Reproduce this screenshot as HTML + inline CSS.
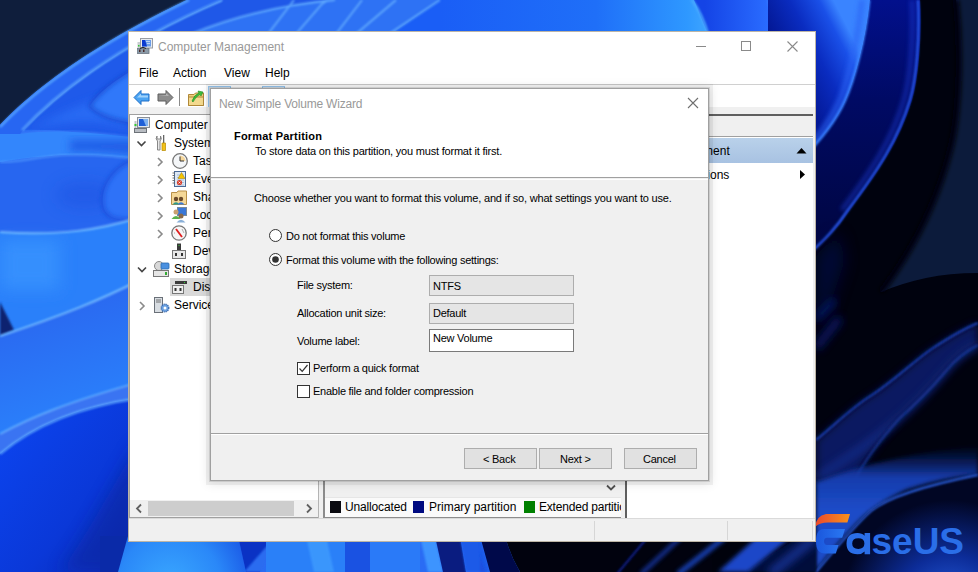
<!DOCTYPE html>
<html><head><meta charset="utf-8">
<style>
*{box-sizing:border-box}
html,body{margin:0;padding:0}
body{width:978px;height:572px;overflow:hidden;position:relative;background:#0c1a38;font-family:"Liberation Sans",sans-serif;}
.a{position:absolute}
.t{position:absolute;white-space:nowrap;line-height:1;font-size:12px;color:#000}
.d{font-size:11px;letter-spacing:-0.25px}
</style></head><body>
<svg id="wp" class="a" style="left:0;top:0" width="978" height="572" viewBox="0 0 978 572">
<defs>
<filter id="b1" x="-20%" y="-20%" width="140%" height="140%"><feGaussianBlur stdDeviation="0.9"/></filter>
<filter id="b2" x="-20%" y="-20%" width="140%" height="140%"><feGaussianBlur stdDeviation="2"/></filter>
<filter id="b4" x="-30%" y="-30%" width="160%" height="160%"><feGaussianBlur stdDeviation="4"/></filter>
<filter id="b8" x="-50%" y="-50%" width="200%" height="200%"><feGaussianBlur stdDeviation="8"/></filter>
<linearGradient id="gDeep" x1="0" y1="0" x2="1" y2="1">
<stop offset="0" stop-color="#0c46f2"/><stop offset="0.6" stop-color="#0a38d8"/><stop offset="1" stop-color="#0828b0"/>
</linearGradient>
<linearGradient id="gTopR" x1="440" y1="0" x2="700" y2="0" gradientUnits="userSpaceOnUse">
<stop offset="0" stop-color="#1a5ef6"/><stop offset="0.6" stop-color="#1f6ff8"/><stop offset="0.95" stop-color="#2e98ff"/><stop offset="1" stop-color="#38a0ff"/>
</linearGradient>
<linearGradient id="gP1" x1="785" y1="95" x2="862" y2="55" gradientUnits="userSpaceOnUse">
<stop offset="0" stop-color="#000e80"/><stop offset="0.55" stop-color="#0a2cc0"/><stop offset="0.85" stop-color="#1a50e8"/><stop offset="1" stop-color="#3a84ff"/>
</linearGradient>
<linearGradient id="gP0" x1="705" y1="0" x2="768" y2="0" gradientUnits="userSpaceOnUse">
<stop offset="0" stop-color="#1444e6"/><stop offset="1" stop-color="#2a6cff"/>
</linearGradient>
<linearGradient id="gR2" x1="0" y1="0" x2="0" y2="250" gradientUnits="userSpaceOnUse">
<stop offset="0" stop-color="#02108c"/><stop offset="0.4" stop-color="#000a64"/><stop offset="1" stop-color="#000640"/>
</linearGradient>
<linearGradient id="gP1R" x1="816" y1="0" x2="870" y2="0" gradientUnits="userSpaceOnUse">
<stop offset="0" stop-color="#0a2cbc"/><stop offset="0.75" stop-color="#1748e4"/><stop offset="1" stop-color="#3a80ff"/>
</linearGradient>
<radialGradient id="gBulge" cx="170" cy="585" r="85" gradientUnits="userSpaceOnUse">
<stop offset="0" stop-color="#3aa8ff"/><stop offset="0.6" stop-color="#2a88f8"/><stop offset="1" stop-color="#1a58e6"/>
</radialGradient>
<radialGradient id="gGlow" cx="950" cy="610" r="110" gradientUnits="userSpaceOnUse">
<stop offset="0" stop-color="#2a64e8"/><stop offset="0.5" stop-color="#0c2c98"/><stop offset="1" stop-color="#010624"/>
</radialGradient>
<linearGradient id="gBand" x1="0" y1="445" x2="0" y2="510" gradientUnits="userSpaceOnUse">
<stop offset="0" stop-color="#0a2478" stop-opacity="0"/><stop offset="0.5" stop-color="#163cac"/><stop offset="1" stop-color="#1c4cc8"/>
</linearGradient>
<linearGradient id="gMid" x1="0" y1="320" x2="40" y2="440" gradientUnits="userSpaceOnUse">
<stop offset="0" stop-color="#2a68f0"/><stop offset="1" stop-color="#2a82fc"/>
</linearGradient>
</defs>
<rect width="978" height="572" fill="#00020c"/>

<!-- ===== LEFT / TOP bloom ===== -->
<rect x="0" y="0" width="712" height="572" fill="#2a6cf4"/>
<!-- left strip petals -->
<path d="M22,130 C50,100 110,48 222,0 H300 V140 H128 C100,136 60,128 22,130 Z" fill="#1f5aea"/>
<path d="M30,130 C60,122 90,118 128,128 V90 C90,100 60,112 30,130 Z" fill="#2c6ef6" opacity="0.8" filter="url(#b4)"/>
<path d="M140,66 C110,82 94,98 90,106 C98,116 115,121 140,124 Z" fill="#3078fa"/>
<path d="M140,66 C110,82 94,98 90,106 C98,116 115,121 140,124" stroke="#1240c8" stroke-width="3" fill="none" opacity="0.75" filter="url(#b2)"/>
<path d="M20,134 C60,128 100,134 140,138" stroke="#4a90ff" stroke-width="1.6" fill="none" opacity="0.8" filter="url(#b1)"/>
<!-- band y134..160 -->
<path d="M0,125 L20,134 C60,128 100,134 140,138 V160 C100,154 60,152 0,162 Z" fill="#3386fc"/>
<path d="M70,140 H140 V156 C110,152 80,150 70,152 Z" fill="#1a52e2" opacity="0.8" filter="url(#b4)"/>
<!-- petal interior y160..233 -->
<path d="M0,162 C20,163 40,156 64,155 C90,154 110,156 140,159 V222 C100,232 60,236 0,232 Z" fill="#2766f0"/>
<ellipse cx="85" cy="195" rx="30" ry="14" fill="#1a50e0" opacity="0.45" filter="url(#b8)"/>
<path d="M0,162 C20,163 40,156 64,155 C90,154 110,156 140,159" stroke="#5aa4ff" stroke-width="1.6" fill="none" opacity="0.8" filter="url(#b1)"/>
<path d="M140,158 C112,165 101,188 103,204 C104,215 112,222 140,219 Z" fill="#2e72f8"/>
<path d="M140,158 C112,165 101,188 103,204 C104,215 112,222 140,219" stroke="#1442d0" stroke-width="3" fill="none" opacity="0.7" filter="url(#b2)"/>
<!-- y 233..335 -->
<path d="M0,232 C60,236 100,230 140,217 V281 C100,300 64,315 0,336 Z" fill="#2a80fa"/>
<path d="M0,240 H60 V290 H0 Z" fill="#3a96ff" opacity="0.7" filter="url(#b8)"/>
<path d="M0,232 C60,236 100,230 140,217" stroke="#7ac0ff" stroke-width="2" fill="none" opacity="0.9" filter="url(#b1)"/>
<path d="M0,302 L14,330 L0,336 Z" fill="#0a2070" filter="url(#b1)"/>
<!-- y 335..455 -->
<path d="M0,336 C64,315 100,300 140,280 V396 C90,405 40,420 0,454 Z" fill="url(#gMid)"/>
<path d="M0,336 C64,315 100,300 140,280" stroke="#7ac0ff" stroke-width="2" fill="none" opacity="0.9" filter="url(#b1)"/>
<path d="M0,434 C30,418 64,403 140,382 V398 C90,405 40,420 0,454 Z" fill="#3a74f2"/>
<path d="M0,434 C30,418 64,403 140,382" stroke="#6ab4ff" stroke-width="1.8" fill="none" opacity="0.9" filter="url(#b1)"/>
<!-- deep blue below line 2 -->
<path d="M0,454 C40,420 90,405 140,398 V572 H0 Z" fill="url(#gDeep)"/>
<path d="M0,454 C40,420 90,405 140,398" stroke="#6ab4ff" stroke-width="1.8" fill="none" opacity="0.9" filter="url(#b1)"/>
<path d="M60,572 C90,530 110,490 140,440 V572 Z" fill="#0826a0" opacity="0.6" filter="url(#b8)"/>

<!-- top right part of top strip -->
<path d="M430,0 H694 L712,34 H380 Z" fill="url(#gTopR)"/>
<path d="M694,0 H768 L775,34 H708 Z" fill="url(#gP0)"/>
<path d="M692,0 Q702,14 708,34" stroke="#48a8ff" stroke-width="2.5" fill="none" filter="url(#b1)"/>
<path d="M768,0 Q772,14 774,34" stroke="#3a7cff" stroke-width="2" fill="none" filter="url(#b1)"/>
<!-- between lines in top strip -->
<path d="M150,31 C175,18 200,8 222,0 H330 C300,5 260,12 191,34 Z" fill="#1f58e8"/>
<path d="M191,34 C240,14 290,4 330,0 H440 L391,34 Z" fill="#2e72f4"/>
<g stroke="#6ab4ff" fill="none" stroke-width="1.8" opacity="0.85" filter="url(#b1)">
<path d="M22,130 C50,100 110,48 222,0"/>
<path d="M191,34 C240,14 290,4 335,0"/>
<path d="M268,34 L294,0"/>
<path d="M296,34 L322,4 L328,0"/>
<path d="M336,34 L362,0"/>
<path d="M356,34 L396,0"/>
<path d="M389,34 L440,0"/>
</g>
<!-- navy TL -->
<path d="M0,0 H187 C150,18 60,62 0,125 Z" fill="#0f1e3c"/>
<path d="M187,0 C150,18 60,62 0,125 V134 L20,134 C50,100 110,48 222,0 Z" fill="#2766f2"/>
<path d="M189,0 C152,18 62,62 0,127" stroke="#58a8ff" stroke-width="2.2" fill="none" filter="url(#b1)"/>
<path d="M22,130 C50,100 110,48 222,0" stroke="#6ab4ff" stroke-width="1.8" fill="none" opacity="0.85" filter="url(#b1)"/>
<!-- ===== RIGHT strip ===== -->
<rect x="770" y="0" width="208" height="572" fill="#00020e"/>
<!-- petal 1 interior -->
<path d="M768,0 H870 C866,40 855,80 846,100 C838,118 826,136 800,160 H768 Z" fill="url(#gP1)"/>
<!-- region 2 -->
<path d="M870,0 H920 C922,40 918,80 912,100 C900,140 880,170 850,210 C840,225 830,238 800,262 V160 C826,136 838,118 846,100 C855,80 866,40 870,0 Z" fill="url(#gR2)"/>
<path d="M869,0 C865,40 854,80 845,100 C837,118 825,136 800,160" stroke="#3a84ff" stroke-width="3" fill="none" filter="url(#b1)"/>
<path d="M862,0 C858,40 848,80 840,100 C832,118 820,136 800,156" stroke="#2a64f4" stroke-width="6" fill="none" opacity="0.6" filter="url(#b2)"/>
<path d="M918,0 C920,40 916,80 910,100 C898,140 878,170 848,210 C838,225 828,238 800,262" stroke="#2a5cf0" stroke-width="2.4" fill="none" filter="url(#b1)"/>
<path d="M912,0 C914,40 910,80 904,100 C892,140 872,170 842,210" stroke="#1a3ad0" stroke-width="5" fill="none" opacity="0.5" filter="url(#b2)"/>
<!-- navy right -->
<path d="M956,0 C962,60 958,120 950,150 C940,190 920,240 881,292 C910,280 940,273 978,273 V0 Z" fill="#0c1b3b"/>
<path d="M956,0 C962,60 958,120 950,150 C940,190 920,240 881,292" stroke="#000010" stroke-width="6" fill="none" filter="url(#b2)"/>
<!-- dark blue blob lower left -->
<path d="M816,256 L838,232 L845,260 L825,320 L816,330 Z" fill="#000a50" opacity="0.6" filter="url(#b8)"/>
<path d="M816,319 L835,300" stroke="#0a1a70" stroke-width="6" fill="none" filter="url(#b4)"/>
<!-- streaks -->
<path d="M816,348 L840,318" stroke="#0a1a78" stroke-width="8" fill="none" opacity="0.8" filter="url(#b4)"/>
<path d="M816,440 C840,420 855,405 872,395 C895,380 915,360 933,348 C950,337 965,328 978,323 V345 C965,352 955,360 947,370 C930,390 915,405 900,418 C880,440 865,460 855,480 H816 Z" fill="#071a6a" opacity="0.9" filter="url(#b4)"/>
<path d="M816,480 C840,460 865,450 900,418 C915,405 930,390 947,370 C955,360 965,352 978,345" stroke="#1a3aa8" stroke-width="6" fill="none" opacity="0.6" filter="url(#b4)"/>
<path d="M816,440 C840,420 855,405 872,395 C895,380 915,360 933,348 C950,337 965,328 978,323" stroke="#1e40b8" stroke-width="2" fill="none" filter="url(#b1)"/>
<path d="M855,480 C865,460 880,440 900,418 C915,405 930,390 947,370 C955,360 965,352 978,345" stroke="#1a3aa0" stroke-width="2" fill="none" opacity="0.8" filter="url(#b1)"/>
<!-- lower band -->
<path d="M816,482 C860,466 900,455 978,446 V475 C940,478 917,487 906,490 C885,500 869,511 860,520 C845,535 830,552 815,572 H816 Z" fill="url(#gBand)" filter="url(#b2)"/>
<path d="M815,572 C835,548 855,524 870,511 C886,498 917,487 978,475 V572 Z" fill="url(#gGlow)"/>
<path d="M816,572 C836,548 856,524 871,511 C887,498 918,487 978,475" stroke="#2a5ee0" stroke-width="2" fill="none" filter="url(#b1)"/>
<!-- ===== BOTTOM strip ===== -->
<rect x="100" y="536" width="30" height="36" fill="#0a2aa8"/>
<path d="M128,536 H238 L246,572 H118 Z" fill="url(#gBulge)"/>
<path d="M238,536 H270 L260,572 H246 Z" fill="#0a32c4"/>
<path d="M244,572 L274,538 L262,572 Z" fill="#2a6cf0" filter="url(#b1)"/>
<rect x="266" y="536" width="80" height="36" fill="#2a80f8"/>
<path d="M306,536 H326 L334,572 H314 Z" fill="#42a0ff" opacity="0.7" filter="url(#b1)"/>
<rect x="345" y="536" width="26" height="36" fill="#1a52e2"/>
<rect x="370" y="536" width="50" height="36" fill="#2a7af8"/>
<path d="M420,536 H435 L443,572 H428 Z" fill="#3c94ff" filter="url(#b1)"/>
<path d="M435,536 H460 L466,572 H443 Z" fill="#0a1c80"/>
<path d="M460,536 H480 L490,572 H466 Z" fill="#1a5ae8" filter="url(#b1)"/>
<path d="M480,536 H505 Q510,555 520,572 H490 Z" fill="#00094a"/>
<path d="M505,536 H712 V572 H520 Q510,555 505,536 Z" fill="#01020e"/>
<path d="M480,536 Q478,555 486,572 H480 Z" fill="#1a50e0" filter="url(#b1)"/>
<path d="M745,572 L800,536 H816 V572 Z" fill="#03093a" filter="url(#b1)"/>
<g fill="none">
<path d="M617,574 L647,538" stroke="#0a1e88" stroke-width="2" filter="url(#b1)"/>
<path d="M641,574 L680,538" stroke="#1a40c0" stroke-width="4" opacity="0.8" filter="url(#b2)"/>
<path d="M678,574 L724,538" stroke="#1e4ed4" stroke-width="5" opacity="0.85" filter="url(#b2)"/>
<path d="M770,574 L815,538" stroke="#1a3aa8" stroke-width="9" opacity="0.8" filter="url(#b4)"/>
</g>
<path d="M718,572 L748,572 L790,538 L756,538 Z" fill="#1a46c8" filter="url(#b2)"/>
</svg>

<!-- logo -->
<svg class="a" style="left:808px;top:505px" width="170" height="60" viewBox="808 505 170 60">
<defs>
<linearGradient id="gOr" x1="816" y1="0" x2="850" y2="0" gradientUnits="userSpaceOnUse"><stop offset="0" stop-color="#ea4a2c"/><stop offset="1" stop-color="#f8921c"/></linearGradient>
<linearGradient id="gE" x1="816" y1="0" x2="845" y2="0" gradientUnits="userSpaceOnUse"><stop offset="0" stop-color="#1a56dc"/><stop offset="1" stop-color="#2a78f2"/></linearGradient>
</defs>
<path d="M826,514 H850 L847.4,522.4 H828 Q820,522.4 815.5,526.5 Q816,516 826,514 Z" fill="url(#gOr)"/>
<path d="M824,529 H845 L842.2,537.7 H827 Q824,537.7 824,541.3 Q824,545 827,545 H838.5 L835.8,553.5 H825 Q816,553.5 816,541.3 Q816,529 824,529 Z" fill="url(#gE)"/>
<path d="M864.6,532.9 H870.1 V554.3 H864.6 V551.5 Q862,554.3 857.5,554.3 Q846.5,554.3 846.5,543.6 Q846.5,532.9 857.5,532.9 Q862,532.9 864.6,535.7 Z M858.3,538.2 Q852.2,538.2 852.2,543.6 Q852.2,549 858.3,549 Q864.4,549 864.4,543.6 Q864.4,538.2 858.3,538.2 Z" fill="#2a6ee8" fill-rule="evenodd"/>
<text x="871.5" y="553.5" font-family="Liberation Sans" font-weight="bold" font-size="37" fill="#2a6ee8" textLength="92.5" lengthAdjust="spacingAndGlyphs">seUS</text>
</svg>
<!-- main window -->
<div class="a" style="left:128px;top:31px;width:688px;height:511px;background:#fff;border:1px solid #bdb5a6"></div>
<!-- title bar -->
<svg class="a" style="left:137px;top:37px" width="17" height="18" viewBox="0 0 17 18">
<rect x="3.5" y="1.5" width="12" height="9.5" fill="#e8ecf0" stroke="#9a9ea4"/>
<rect x="5" y="3" width="9" height="6.5" fill="#6a9ce8"/><path d="M5,3 H8 L10,9.5 H5 Z" fill="#0a3ad0"/>
<path d="M9,4.5 H13 M10,6.5 H13" stroke="#cfe0f8" stroke-width="0.8"/>
<rect x="0" y="11.5" width="12" height="5" fill="#8a9aa8" stroke="#6a7680" stroke-width="0.8"/>
<rect x="2" y="12.5" width="1.5" height="2.5" fill="#4a2a2a"/><rect x="6" y="12.5" width="1.5" height="2.5" fill="#4a2a2a"/>
<path d="M3,11.5 Q6,9 9,11.5" stroke="#222" stroke-width="1" fill="none"/>
<rect x="0.5" y="5" width="2.5" height="6" fill="#c8ccd0"/><rect x="1" y="8" width="1.5" height="1.5" fill="#3c3"/>
</svg>
<div class="t" style="left:158px;top:41px;color:#999">Computer Management</div>
<div class="a" style="left:696px;top:46px;width:10px;height:1px;background:#8a8a8a"></div>
<div class="a" style="left:741px;top:41px;width:10px;height:10px;border:1px solid #8a8a8a"></div>
<svg class="a" style="left:786px;top:40px" width="13" height="13" viewBox="0 0 13 13"><path d="M1.5,1.5 L11.5,11.5 M11.5,1.5 L1.5,11.5" stroke="#8a8a8a" stroke-width="1.1"/></svg>
<!-- menu -->
<div class="t" style="left:139px;top:67px">File</div>
<div class="t" style="left:173px;top:67px">Action</div>
<div class="t" style="left:224px;top:67px">View</div>
<div class="t" style="left:265px;top:67px">Help</div>
<div class="a" style="left:129px;top:84px;width:686px;height:1px;background:#d0d0d0"></div>
<!-- toolbar -->
<svg class="a" style="left:133px;top:89px" width="18" height="17" viewBox="0 0 18 17">
<path d="M1,8.5 L8,1.5 V5 H16 V12 H8 V15.5 Z" fill="#4aa3f2" stroke="#1f6fc8" stroke-width="1"/>
<path d="M4,8.5 L8,4.5 V6.5 H15 V8.5 Z" fill="#9fd2fb"/>
</svg>
<svg class="a" style="left:156px;top:89px" width="18" height="17" viewBox="0 0 18 17">
<path d="M17,8.5 L10,1.5 V5 H2 V12 H10 V15.5 Z" fill="#8c8c8c" stroke="#5e5e5e" stroke-width="1"/>
<path d="M3,6 H10 V4 L13,7 Z" fill="#b8b8b8"/>
</svg>
<div class="a" style="left:179px;top:88px;width:1px;height:18px;background:#8a8a8a"></div>
<svg class="a" style="left:188px;top:90px" width="16" height="16" viewBox="0 0 16 16">
<path d="M0.5,4.5 H6 L7.5,3 H15.5 V15.5 H0.5 Z" fill="#f0d080" stroke="#b08838"/>
<path d="M0.5,7 H15.5 V15.5 H0.5 Z" fill="#f3d98e" stroke="#b08838"/>
<path d="M4,11 Q6,5 11,3 L10,1 L15,2 L13,6 L12,4.5 Q8,6 5,12 Z" fill="#3cbf3c" stroke="#1e8a1e" stroke-width="0.6"/>
</svg>
<div class="a" style="left:208px;top:86px;width:23px;height:22px;border:1px solid #99c9f3;background:#e5f1fb"></div>
<div class="a" style="left:262px;top:86px;width:23px;height:22px;border:1px solid #99c9f3;background:#e5f1fb"></div>
<div class="a" style="left:129px;top:107px;width:686px;height:7px;background:#f0f0f0"></div>
<!-- left pane -->
<div class="a" style="left:129px;top:114px;width:190px;height:404px;border:1px solid #a0a0a0;background:#fff"></div>
<div class="a" style="left:170px;top:278px;width:48px;height:18px;background:#d9d9d9"></div>
<!-- tree chevrons -->
<svg class="a" style="left:130px;top:115px" width="40" height="200" viewBox="0 0 40 200">
<g fill="none" stroke="#444" stroke-width="1.6">
<path d="M7.5,26.5 L11.5,30.5 L15.5,26.5"/>
<path d="M8,152.5 L12,156.5 L16,152.5"/>
</g>
<g fill="none" stroke="#8a8a8a" stroke-width="1.6">
<path d="M28,43 L32,47 L28,51"/>
<path d="M28,61 L32,65 L28,69"/>
<path d="M28,79 L32,83 L28,87"/>
<path d="M28,97 L32,101 L28,105"/>
<path d="M28,115 L32,119 L28,123"/>
<path d="M10,187 L14,191 L10,195"/>
</g>
</svg>
<!-- tree icons -->
<svg class="a" style="left:133px;top:116px" width="80" height="200" viewBox="0 0 80 200">
<!-- computer -->
<g transform="translate(1,1)">
<rect x="3.5" y="0.5" width="12" height="10" fill="#dfe6ee" stroke="#8a8f96"/>
<rect x="5" y="2" width="9" height="7" fill="#1e5fd8"/><path d="M9,2 H14 V9 H12 Z" fill="#7fb2f0"/>
<rect x="0.5" y="11.5" width="12" height="4" fill="#b8bcc2" stroke="#6d7278"/>
<rect x="0.5" y="4" width="2" height="7" fill="#c0c4c8"/><rect x="0.5" y="7" width="2" height="2" fill="#3c3"/>
</g>
<!-- system tools -->
<g transform="translate(22,19)">
<path d="M2,1 Q0,4 2.5,6 V15 H5 V6 Q7.5,4 5.5,1 V4 H2 Z" fill="#e8e8e8" stroke="#7a7a7a" stroke-width="0.9"/>
<rect x="8" y="0" width="1.3" height="8" fill="#666"/>
<path d="M7,8 H10.5 V15.5 H7 Z" fill="#f2c21b" stroke="#b88a00" stroke-width="0.7"/>
</g>
<!-- task scheduler clock -->
<g transform="translate(39,37)">
<circle cx="8" cy="8" r="7.3" fill="#f4f6f8" stroke="#777" stroke-width="1.3"/>
<path d="M8,8 V2.5 A5.5,5.5 0 0 1 13.5,8 Z" fill="#f6d79c"/>
<path d="M8,3.5 V8 H12" stroke="#333" stroke-width="1" fill="none"/>
</g>
<!-- event viewer -->
<g transform="translate(39,55)">
<rect x="2.5" y="0.5" width="11" height="15" fill="#dde8f4" stroke="#4a6a98"/>
<path d="M0.5,2 H3 M0.5,4.5 H3 M0.5,7 H3 M0.5,9.5 H3 M0.5,12 H3" stroke="#666" stroke-width="0.9"/>
<path d="M5,4 H12 M5,6.5 H12 M5,9 H12 M5,11.5 H12 M5,14 H12" stroke="#9ab4d4" stroke-width="0.8"/>
<path d="M9.5,1.5 L13,7.5 H6 Z" fill="#f5c400" stroke="#a07c00" stroke-width="0.5"/>
<circle cx="7.5" cy="11.5" r="2.6" fill="#d8402e"/>
<path d="M6.5,10.5 L8.5,12.5 M8.5,10.5 L6.5,12.5" stroke="#fff" stroke-width="0.7"/>
</g>
<!-- shared folders -->
<g transform="translate(38,73)">
<path d="M0.5,3.5 H6 L7,2 H15.5 V15.5 H0.5 Z" fill="#f4d898" stroke="#b89048"/>
<circle cx="5" cy="10" r="2.2" fill="#6a4a2a"/><path d="M1.5,15.5 Q5,11 8.5,15.5 Z" fill="#2a9a8a"/>
<circle cx="10" cy="10" r="2.2" fill="#6a4a2a"/><path d="M6.5,15.5 Q10,11 13.5,15.5 Z" fill="#3a7ad8"/>
</g>
<!-- local users -->
<g transform="translate(38,91)">
<rect x="6.5" y="0.5" width="9" height="8" fill="#3a78d8" stroke="#7a8a9a"/>
<circle cx="5" cy="5" r="2.5" fill="#c8a070"/><path d="M0.5,12 Q5,6 9.5,12 Z" fill="#5ab04a"/>
<circle cx="10" cy="9" r="2.5" fill="#8a6a4a"/><path d="M5.5,15.5 Q10,10 14.5,15.5 Z" fill="#8ab0d8"/>
</g>
<!-- performance -->
<g transform="translate(38,109)">
<circle cx="8" cy="8" r="7.2" fill="#f6f6f6" stroke="#777" stroke-width="1.3"/>
<path d="M5,4 L11,12" stroke="#e02020" stroke-width="1.8"/>
<path d="M11,4 L13,8 M3,8 H4" stroke="#999" stroke-width="0.8"/>
</g>
<!-- device manager -->
<g transform="translate(39,127)">
<rect x="5" y="0.5" width="4" height="7" fill="#3a3a3a"/><rect x="6.5" y="2" width="1" height="1" fill="#3c3"/>
<rect x="0.5" y="7.5" width="13" height="8" fill="#e8e8e8" stroke="#777"/>
<rect x="3" y="10" width="2" height="3" fill="#333"/><rect x="9" y="10" width="2" height="3" fill="#333"/>
</g>
<!-- storage -->
<g transform="translate(20,145)">
<circle cx="6" cy="5" r="4.5" fill="#d8d8d8" stroke="#888"/>
<rect x="8" y="2" width="8" height="6" rx="1" fill="#4a90e0" stroke="#2a6ab0" stroke-width="0.8"/>
<rect x="0.5" y="9.5" width="15" height="6" fill="#e6e6e6" stroke="#777"/>
<rect x="12" y="11" width="2" height="3" fill="#3a3"/>
</g>
<!-- disk mgmt -->
<g transform="translate(39,163)">
<rect x="3" y="2" width="12" height="3" fill="#3a3a3a"/><rect x="12" y="3" width="1" height="1" fill="#3c3"/>
<rect x="0.5" y="6.5" width="11" height="8" fill="#eee" stroke="#777"/>
<rect x="2.5" y="9" width="2" height="3" fill="#333"/><rect x="7.5" y="9" width="2" height="3" fill="#333"/>
</g>
<!-- services -->
<g transform="translate(21,181)">
<rect x="0.5" y="0.5" width="8" height="15" fill="#d8dde2" stroke="#6a7078"/>
<path d="M2,3 H7 M2,5 H7" stroke="#555" stroke-width="0.8"/>
<circle cx="11" cy="11" r="3.8" fill="#6aa0e0" stroke="#3a6ab0" stroke-dasharray="1.2 0.8" stroke-width="1.3"/>
<circle cx="11" cy="11" r="1.5" fill="#fff"/>
</g>
</svg>
<div class="t" style="left:155px;top:119px">Computer</div>
<div class="t" style="left:174px;top:137px">System Tools</div>
<div class="t" style="left:193px;top:155px">Task Scheduler</div>
<div class="t" style="left:193px;top:173px">Event Viewer</div>
<div class="t" style="left:193px;top:191px">Shared Folders</div>
<div class="t" style="left:193px;top:209px">Local Users and Groups</div>
<div class="t" style="left:193px;top:227px">Performance</div>
<div class="t" style="left:193px;top:245px">Device Manager</div>
<div class="t" style="left:174px;top:263px">Storage</div>
<div class="t" style="left:193px;top:281px">Disk Management</div>
<div class="t" style="left:174px;top:299px">Services and Applications</div>
<!-- left scrollbar -->
<div class="a" style="left:130px;top:500px;width:188px;height:17px;background:#f0f0f0"></div>
<div class="a" style="left:148px;top:501px;width:146px;height:15px;background:#cdcdcd"></div>
<svg class="a" style="left:131px;top:501px" width="187" height="15" viewBox="0 0 187 15">
<path d="M10,3.5 L6,7.5 L10,11.5" stroke="#606060" stroke-width="1.8" fill="none"/>
<path d="M176,3.5 L180,7.5 L176,11.5" stroke="#606060" stroke-width="1.8" fill="none"/>
</svg>
<!-- center pane -->
<div class="a" style="left:318px;top:114px;width:5px;height:404px;background:#f0f0f0;border-left:1px solid #b4b4b4"></div>
<div class="a" style="left:323px;top:114px;width:302px;height:404px;border:1px solid #8c8c8c;border-left:2px solid #8c8c8c;background:#f0f0f0"></div>
<div class="a" style="left:602px;top:478px;width:19px;height:18px;background:#f0f0f0"></div>
<svg class="a" style="left:604px;top:482px" width="14" height="12" viewBox="0 0 14 12"><path d="M3,3.5 L7,7.5 L11,3.5" stroke="#505050" stroke-width="1.8" fill="none"/></svg>
<div class="a" style="left:325px;top:497px;width:296px;height:20px;background:#fafafa;border-top:1px solid #e6e6e6"></div>
<div class="a" style="left:330px;top:501px;width:11px;height:12px;background:#0a0a10"></div>
<div class="t" style="left:345px;top:501px;letter-spacing:-0.15px">Unallocated</div>
<div class="a" style="left:413px;top:501px;width:11px;height:12px;background:#000a80"></div>
<div class="t" style="left:429px;top:501px">Primary partition</div>
<div class="a" style="left:524px;top:501px;width:11px;height:12px;background:#008000"></div>
<div class="a" style="left:539px;top:497px;width:82px;height:20px;overflow:hidden"><div class="t" style="left:0;top:4px;letter-spacing:-0.2px">Extended partition</div></div>
<div class="a" style="left:621px;top:114px;width:4px;height:404px;background:#f0f0f0"></div>
<!-- action pane -->
<div class="a" style="left:625px;top:114px;width:190px;height:404px;border-left:2px solid #5f5f5f;border-top:2px solid #5f5f5f;background:#fff"></div>
<div class="a" style="left:627px;top:116px;width:186px;height:21px;background:#f0f0f0;border-bottom:1px solid #a0a0a0"></div>
<div class="a" style="left:627px;top:138px;width:186px;height:25px;background:linear-gradient(#b9d1ea,#a8c2e2)"></div>
<div class="t" style="left:633px;top:145px">Disk Management</div>
<div class="t" style="left:660px;top:169px">More Actions</div>
<svg class="a" style="left:795px;top:146px" width="14" height="36" viewBox="0 0 14 36">
<path d="M1.5,7.5 L6.5,2 L11.5,7.5 Z" fill="#000"/>
<path d="M5,24 L10,28.5 L5,33 Z" fill="#000"/>
</svg>
<div class="a" style="left:813px;top:114px;width:2px;height:404px;background:#f0f0f0"></div>
<!-- status bar -->
<div class="a" style="left:129px;top:518px;width:686px;height:23px;background:#f0f0f0;border-top:1px solid #dadada"></div>
<div class="a" style="left:594px;top:521px;width:1px;height:19px;background:#d6d6d6"></div>
<div class="a" style="left:727px;top:521px;width:1px;height:19px;background:#d6d6d6"></div>
<div class="a" style="left:812px;top:521px;width:1px;height:19px;background:#d6d6d6"></div>
<!-- dialog -->
<div class="a" style="left:210px;top:88px;width:499px;height:393px;background:#f0f0f0;border:1px solid #a0a0a0;box-shadow:0 0 0 1px rgba(0,0,0,0.1),0 0 0 4px rgba(0,0,0,0.05),0 1px 10px 2px rgba(0,0,0,0.1)"></div>
<div class="a" style="left:211px;top:89px;width:497px;height:89px;background:#fff;border-bottom:1px solid #a0a0a0"></div>
<div class="a" style="left:211px;top:179px;width:497px;height:1px;background:#fff"></div>
<svg class="a" style="left:687px;top:97px" width="12" height="12" viewBox="0 0 12 12"><path d="M1,1 L11,11 M11,1 L1,11" stroke="#6f6f6f" stroke-width="1.1"/></svg>
<svg class="a" style="left:268px;top:228px" width="15" height="40" viewBox="0 0 15 40">
<circle cx="7.5" cy="7.5" r="6" fill="#fff" stroke="#333" stroke-width="1"/>
<circle cx="7.5" cy="31.5" r="6" fill="#fff" stroke="#333" stroke-width="1"/>
<circle cx="7.5" cy="31.5" r="3.3" fill="#333"/>
</svg>
<svg class="a" style="left:296px;top:361px" width="15" height="38" viewBox="0 0 15 38">
<rect x="1.5" y="1.5" width="12" height="12" fill="#fff" stroke="#333" stroke-width="1"/>
<path d="M3.5,7.5 L6.2,10.3 L11.5,4" stroke="#333" stroke-width="1.2" fill="none"/>
<rect x="1.5" y="24.5" width="12" height="12" fill="#fff" stroke="#333" stroke-width="1"/>
</svg>
<svg class="a" style="left:556px;top:280px" width="16" height="40" viewBox="0 0 16 40">
<path d="M4,4 L8,8 L12,4" stroke="#505050" stroke-width="1" fill="none"/>
<path d="M4,32 L8,36 L12,32" stroke="#505050" stroke-width="1" fill="none"/>
</svg>
<div class="t" style="left:219px;top:98px;color:#999;letter-spacing:-0.2px">New Simple Volume Wizard</div>
<div class="t d" style="left:234px;top:131px;font-weight:bold;letter-spacing:0.2px">Format Partition</div>
<div class="t d" style="left:255px;top:146px;letter-spacing:-0.2px">To store data on this partition, you must format it first.</div>
<div class="t d" style="left:254px;top:193px;letter-spacing:-0.18px">Choose whether you want to format this volume, and if so, what settings you want to use.</div>
<div class="t d" style="left:286px;top:231px">Do not format this volume</div>
<div class="t d" style="left:286px;top:255px">Format this volume with the following settings:</div>
<div class="t d" style="left:297px;top:280px">File system:</div>
<div class="t d" style="left:297px;top:308px">Allocation unit size:</div>
<div class="t d" style="left:297px;top:336px">Volume label:</div>
<div class="a" style="left:429px;top:275px;width:145px;height:21px;background:#e5e5e5;border:1px solid #adadad"></div>
<div class="a" style="left:429px;top:303px;width:145px;height:21px;background:#e5e5e5;border:1px solid #adadad"></div>
<div class="a" style="left:429px;top:329px;width:145px;height:23px;background:#fff;border:1px solid #7a7a7a"></div>
<div class="t d" style="left:433px;top:281px">NTFS</div>
<div class="t d" style="left:433px;top:308px">Default</div>
<div class="t d" style="left:433px;top:333px">New Volume</div>
<div class="t d" style="left:313px;top:363px">Perform a quick format</div>
<div class="t d" style="left:313px;top:386px">Enable file and folder compression</div>
<div class="a" style="left:211px;top:433px;width:497px;height:1px;background:#a0a0a0"></div>
<div class="a" style="left:211px;top:434px;width:497px;height:1px;background:#fff"></div>
<div class="a" style="left:464px;top:448px;width:73px;height:21px;background:#e1e1e1;border:1px solid #adadad"></div>
<div class="a" style="left:539px;top:448px;width:73px;height:21px;background:#e1e1e1;border:1px solid #adadad"></div>
<div class="a" style="left:624px;top:448px;width:73px;height:21px;background:#e1e1e1;border:1px solid #adadad"></div>
<div class="t d" style="left:483px;top:454px">&lt; Back</div>
<div class="t d" style="left:560px;top:454px">Next &gt;</div>
<div class="t d" style="left:643px;top:454px">Cancel</div>
</body></html>
